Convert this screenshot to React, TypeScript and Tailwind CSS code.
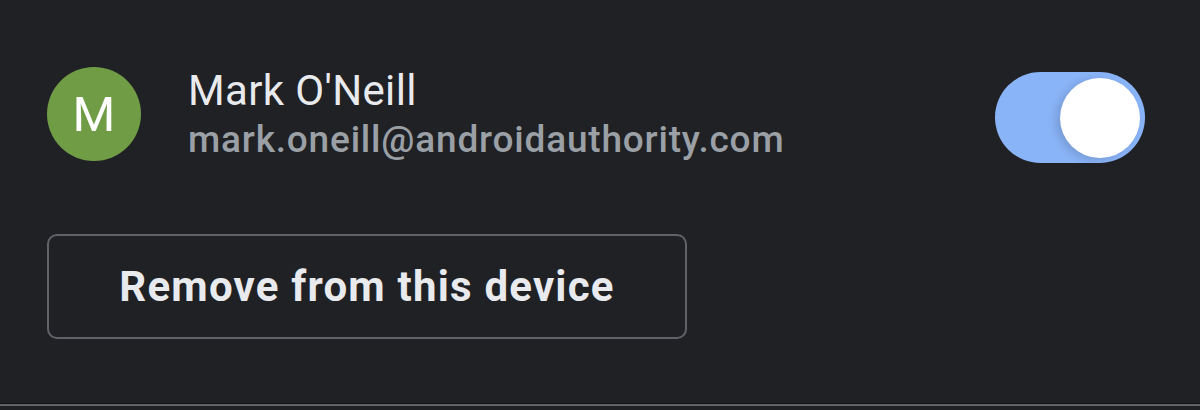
export default function App() {
  return (
    <div
      className="w-[1200px] h-[410px] bg-[#202124] flex flex-col overflow-hidden"
      style={{ fontFamily: "Roboto, 'Liberation Sans', sans-serif" }}
    >
      {/* account row */}
      <div className="flex items-start pl-[47px] pr-[55px] pt-[67px]">
        <div className="w-[94px] h-[94px] rounded-full bg-[#709c46] flex items-center justify-center text-white text-[49px] leading-none">
          M
        </div>
        <div className="ml-[47px] flex flex-col">
          <div className="text-[#e8eaed] text-[42px] leading-[48px] tracking-[0.35px]">
            Mark O'Neill
          </div>
          <div className="text-[#9aa0a6] text-[37px] leading-[50px] font-medium tracking-[0.8px]">
            mark.oneill@androidauthority.com
          </div>
        </div>
        <div className="ml-auto mt-[5px] w-[150px] h-[91px] rounded-full bg-[#8ab4f8] flex items-center justify-end pr-[5px]">
          <div className="w-[80px] h-[80px] rounded-full bg-white shadow-[-4px_2px_8px_rgba(0,0,0,0.15)]" />
        </div>
      </div>

      {/* remove button */}
      <div className="pl-[47px] mt-[69px]">
        <button className="w-[640px] h-[105px] rounded-[10px] border-2 border-[#5f6368] flex items-center justify-center text-[#e8eaed] text-[42px] font-bold tracking-[1.2px]">
          Remove from this device
        </button>
      </div>

      <div className="mt-auto mb-[4px] h-[3px] bg-[#5f6368] border-t border-[#111214]" />
    </div>
  );
}
